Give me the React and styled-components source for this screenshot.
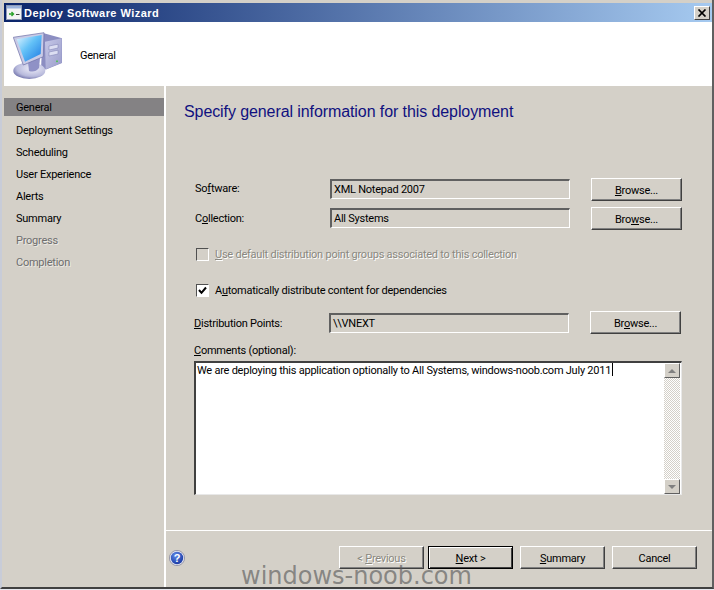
import React from "react";
import styled, { createGlobalStyle } from "styled-components";

const GlobalStyles = createGlobalStyle`
    html, body {
        margin: 0;
        padding: 0;
        background: #e6e8ee;
    }
    * {
        box-sizing: border-box;
    }
`;

const steps = [
    { name: "General", active: true },
    { name: "Deployment Settings" },
    { name: "Scheduling" },
    { name: "User Experience" },
    { name: "Alerts" },
    { name: "Summary" },
    { name: "Progress", muted: true },
    { name: "Completion", muted: true },
];

const ComputerIcon = () => (
    <svg width="50" height="48" viewBox="0 0 50 48">
        <defs>
            <linearGradient id="screen" x1="0" y1="0" x2="1" y2="1">
                <stop offset="0" stopColor="#e4f6ff" />
                <stop offset="0.45" stopColor="#63c1f7" />
                <stop offset="1" stopColor="#1c78e2" />
            </linearGradient>
            <linearGradient id="tower" x1="0" y1="0" x2="1" y2="1">
                <stop offset="0" stopColor="#c6c8e8" />
                <stop offset="1" stopColor="#9a9cca" />
            </linearGradient>
            <radialGradient id="disc" cx="0.6" cy="0.35" r="0.7">
                <stop offset="0" stopColor="#f0f0fa" />
                <stop offset="0.7" stopColor="#b8badc" />
                <stop offset="1" stopColor="#6d6fa8" />
            </radialGradient>
        </defs>
        <path d="M30 1 L49 6.3 L49 31 L33 37.5 L28 36 Z" fill="#8c8ec2" />
        <path d="M32 9.7 L48.7 6.3 L48.7 30.7 L32.7 37.3 Z" fill="url(#tower)" />
        <path d="M36 14 L45 12.2 L45 16 L36 18 Z M36 20 L45 18.2 L45 22 L36 24 Z" fill="#dcdef2" stroke="#7a7cb0" strokeWidth="0.5" />
        <rect x="43" y="28.5" width="2" height="1.6" fill="#58c060" />
        <ellipse cx="16.3" cy="38.7" rx="16" ry="8.3" fill="url(#disc)" />
        <path d="M15 30 L27 26 L26 36 Q22 41 16 39 Z" fill="#8f91c6" />
        <path d="M0.3 5.3 L31 0.7 L30.3 24.7 L10.3 33 Z" fill="#c9cbe6" stroke="#6d6fa6" strokeWidth="0.7" />
        <path d="M3.7 7.3 L28.7 3 L27.7 22 L12 29.7 Z" fill="url(#screen)" />
    </svg>
);

const TitleIcon = () => (
    <svg width="16" height="15" viewBox="0 0 16 15">
        <rect x="0.5" y="0.5" width="15" height="14" fill="#f4f4f4" stroke="#8f9bb5" />
        <rect x="1" y="1" width="14" height="2.5" fill="#9db4dc" />
        <path d="M3 9 H7.5 M5.5 7 L7.5 9 L5.5 11" fill="none" stroke="#2aa32a" strokeWidth="1.4" />
        <path d="M10 9.5 H13.5" stroke="#444" />
    </svg>
);

const HelpIcon = () => (
    <svg width="16" height="16" viewBox="0 0 16 16">
        <defs>
            <radialGradient id="help" cx="0.4" cy="0.3" r="0.8">
                <stop offset="0" stopColor="#5f8ae8" />
                <stop offset="1" stopColor="#12309c" />
            </radialGradient>
        </defs>
        <circle cx="8" cy="8" r="7.6" fill="#e4e6f0" stroke="#7c7e96" strokeWidth="0.7" />
        <circle cx="8" cy="8" r="6.2" fill="url(#help)" />
        <text x="8" y="12" textAnchor="middle" fill="#fff" fontSize="11" fontWeight="700" fontFamily="Liberation Sans, sans-serif">?</text>
    </svg>
);

const App = () => {
    return (
        <>
            <GlobalStyles />
            <Window>
                <TitleBar>
                    <TitleIcon />
                    <TitleText>Deploy Software Wizard</TitleText>
                    <CloseBtn>
                        <svg width="10" height="8" viewBox="0 0 10 8">
                            <path d="M1.5 0.5 L8.5 7.5 M8.5 0.5 L1.5 7.5" stroke="#000" strokeWidth="1.7" />
                        </svg>
                    </CloseBtn>
                </TitleBar>
                <Header>
                    <IconSlot>
                        <ComputerIcon />
                    </IconSlot>
                    <HeaderLabel>General</HeaderLabel>
                </Header>
                <Body>
                    <Sidebar>
                        {steps.map((step) => (
                            <Step key={step.name} $active={step.active} $muted={step.muted}>
                                {step.name}
                            </Step>
                        ))}
                    </Sidebar>
                    <Main>
                        <Content>
                            <Heading>Specify general information for this deployment</Heading>
                            <SoftwareRow>
                                <Label $top={4}>So<u>f</u>tware:</Label>
                                <Field>XML Notepad 2007</Field>
                                <Button>
                                    <u>B</u>rowse...
                                </Button>
                            </SoftwareRow>
                            <CollectionRow>
                                <Label $top={5}>C<u>o</u>llection:</Label>
                                <Field>All Systems</Field>
                                <Button>
                                    Bro<u>w</u>se...
                                </Button>
                            </CollectionRow>
                            <DisabledCheck>
                                <CheckBox $disabled />
                                <CheckLabel $disabled>
                                    <u>U</u>se default distribution point groups associated to this collection
                                </CheckLabel>
                            </DisabledCheck>
                            <EnabledCheck>
                                <CheckBox>
                                    <svg width="9" height="9" viewBox="0 0 9 9">
                                        <path d="M1 4 L3.5 6.8 L8 1.5" fill="none" stroke="#000" strokeWidth="2" />
                                    </svg>
                                </CheckBox>
                                <CheckLabel>
                                    A<u>u</u>tomatically distribute content for dependencies
                                </CheckLabel>
                            </EnabledCheck>
                            <PointsRow>
                                <Label $top={6}><u>D</u>istribution Points:</Label>
                                <Field>\\VNEXT</Field>
                                <Button>
                                    Br<u>o</u>wse...
                                </Button>
                            </PointsRow>
                            <CommentsLabel><u>C</u>omments (optional):</CommentsLabel>
                            <TextBox>
                                <TextValue>
                                    We are deploying this application optionally to All Systems, windows-noob.com July 2011
                                    <Caret />
                                </TextValue>
                                <ScrollBar>
                                    <ScrollBtn>
                                        <Arrow />
                                    </ScrollBtn>
                                    <ScrollTrack />
                                    <ScrollBtn>
                                        <Arrow $down />
                                    </ScrollBtn>
                                </ScrollBar>
                            </TextBox>
                        </Content>
                        <Footer>
                            <HelpWrap>
                                <HelpIcon />
                            </HelpWrap>
                            <FooterButton $disabled>
                                &lt; <u>P</u>revious
                            </FooterButton>
                            <FooterButton $primary>
                                <u>N</u>ext &gt;
                            </FooterButton>
                            <FooterButton>
                                <u>S</u>ummary
                            </FooterButton>
                            <FooterButton>Cancel</FooterButton>
                        </Footer>
                    </Main>
                </Body>
                <Watermark>windows-noob.com</Watermark>
            </Window>
        </>
    );
};

const Window = styled.div`
    position: relative;
    width: 714px;
    height: 589px;
    padding: 3px 0 0 2px;
    background: #d4d0c8;
    font-family: Roboto, "Liberation Sans", Arial, sans-serif;
    font-size: 11px;
    letter-spacing: -0.24px;
    color: #000;
    border-left: 2px solid #c8ccd8;
    border-right: 2px solid #606060;
    border-bottom: 2px solid #404040;
    display: flex;
    flex-direction: column;
    u {
        text-underline-offset: 1px;
    }
`;

const TitleBar = styled.div`
    height: 19px;
    flex: none;
    display: flex;
    align-items: center;
    gap: 2px;
    padding: 0 2px;
    background: linear-gradient(90deg, #0a246a 0%, #a6caf0 100%);
`;

const TitleText = styled.span`
    flex: 1;
    color: #fff;
    font-family: "Liberation Sans", Arial, sans-serif;
    font-size: 11px;
    font-weight: 700;
    letter-spacing: 0.45px;
`;

const CloseBtn = styled.div`
    width: 16px;
    height: 14px;
    display: flex;
    align-items: center;
    justify-content: center;
    background: #d4d0c8;
    border: 1px solid;
    border-color: #fff #404040 #404040 #fff;
`;

const Header = styled.div`
    height: 64px;
    flex: none;
    display: flex;
    align-items: center;
    padding: 2px 0 0 9px;
    background: #fff;
`;

const IconSlot = styled.div`
    display: flex;
    margin-top: 2px;
`;

const HeaderLabel = styled.span`
    margin-left: 17px;
`;

const Body = styled.div`
    flex: 1;
    display: flex;
    min-height: 0;
`;

const Sidebar = styled.div`
    width: 162px;
    flex: none;
    padding-top: 12px;
    border-right: 2px solid #fff;
`;

const Step = styled.div`
    height: ${(p) => (p.$active ? "18px" : "22px")};
    margin-bottom: ${(p) => (p.$active ? "4px" : "0")};
    padding-left: 12px;
    line-height: ${(p) => (p.$active ? "19px" : "22px")};
    background: ${(p) => (p.$active ? "#848284" : "transparent")};
    color: ${(p) => (p.$muted ? "#6e6e6e" : "#000")};
    text-shadow: ${(p) => (p.$muted ? "1px 1px 0 #eceae4" : "none")};
`;

const Main = styled.div`
    flex: 1;
    display: flex;
    flex-direction: column;
    min-width: 0;
`;

const Content = styled.div`
    flex: 1;
    display: flex;
    flex-direction: column;
    padding: 15px 0 0 28px;
`;

const Heading = styled.h1`
    margin: 0 0 0 -10px;
    font-family: "Liberation Sans", Arial, sans-serif;
    font-size: 16px;
    line-height: 22px;
    font-weight: 400;
    letter-spacing: -0.09px;
    color: #10107f;
`;

const Field = styled.div`
    height: 20px;
    margin-top: 1px;
    line-height: 17px;
    padding-left: 2px;
    background: #d4d0c8;
    border: 1px solid;
    border-width: 2px 1px 1px 2px;
    border-color: #606060 #fff #fff #606060;
    white-space: nowrap;
`;

const FormRow = styled.div`
    display: grid;
    grid-template-columns: 135px 240px 112px;
    align-items: start;
    height: 23px;
    padding-left: 1px;
`;

const SoftwareRow = styled(FormRow)`
    margin-top: 55px;
`;

const CollectionRow = styled(FormRow)`
    margin-top: 6px;
`;

const PointsRow = styled(FormRow)`
    margin-top: 14px;
    margin-left: -1px;
    ${Field} {
        margin-top: 2px;
    }
`;

const Label = styled.span`
    margin-top: ${(p) => p.$top}px;
    line-height: 14px;
    white-space: nowrap;
`;

const Button = styled.div`
    height: 23px;
    margin-left: 21px;
    padding-top: 1px;
    display: flex;
    align-items: center;
    justify-content: center;
    white-space: pre;
    border: 1px solid;
    border-color: #fff #404040 #404040 #fff;
    box-shadow: inset -1px -1px 0 #808080;
    background: #d4d0c8;
`;

const CheckRow = styled.div`
    display: flex;
    align-items: center;
    gap: 6px;
    padding-left: 2px;
    height: 14px;
`;

const DisabledCheck = styled(CheckRow)`
    margin-top: 17px;
`;

const EnabledCheck = styled(CheckRow)`
    margin-top: 22px;
`;

const CheckBox = styled.div`
    width: 13px;
    height: 13px;
    flex: none;
    display: flex;
    align-items: center;
    justify-content: center;
    border: 1px solid;
    border-color: #505050 #fff #fff #505050;
    background: ${(p) => (p.$disabled ? "#d4d0c8" : "#fff")};
`;

const CheckLabel = styled.span`
    white-space: nowrap;
    color: ${(p) => (p.$disabled ? "#8a8880" : "#000")};
    text-shadow: ${(p) => (p.$disabled ? "1px 1px 0 #fff" : "none")};
`;

const CommentsLabel = styled.div`
    margin-top: 10px;
    height: 14px;
    line-height: 14px;
`;

const TextBox = styled.div`
    margin-top: 3px;
    width: 488px;
    height: 134px;
    flex: none;
    display: flex;
    background: #fff;
    border: 1px solid;
    border-width: 2px 1px 1px 2px;
    border-color: #404040 #e8e8e8 #e8e8e8 #404040;
`;

const TextValue = styled.div`
    flex: 1;
    padding: 0 0 0 1px;
    line-height: 13px;
    white-space: nowrap;
`;

const Caret = styled.span`
    display: inline-block;
    width: 1px;
    height: 13px;
    margin-left: 1px;
    background: #000;
    vertical-align: -2px;
`;

const ScrollBar = styled.div`
    width: 16px;
    margin-right: 1px;
    flex: none;
    display: flex;
    flex-direction: column;
`;

const ScrollBtn = styled.div`
    height: 15px;
    flex: none;
    display: flex;
    align-items: center;
    justify-content: center;
    background: #d4d0c8;
    border: 1px solid;
    border-color: #fff #606060 #606060 #fff;
`;

const ScrollTrack = styled.div`
    flex: 1;
    background: repeating-conic-gradient(#fff 0 25%, #d4d0c8 0 50%) 0 0 / 2px 2px;
`;

const Arrow = styled.span`
    width: 0;
    height: 0;
    border-left: 4px solid transparent;
    border-right: 4px solid transparent;
    ${(p) => (p.$down ? "border-top: 4px solid #808080;" : "border-bottom: 4px solid #808080;")}
`;

const Footer = styled.div`
    height: 57px;
    flex: none;
    display: flex;
    align-items: flex-start;
    padding: 15px 15px 0 0;
    border-top: 1px solid #fff;
`;

const HelpWrap = styled.div`
    margin: 4px auto 0 3px;
    width: 16px;
`;

const FooterButton = styled.div`
    width: 85px;
    height: 23px;
    margin-left: ${(p) => (p.$primary ? "4px" : "7px")};
    padding-top: 1px;
    flex: none;
    display: flex;
    align-items: center;
    justify-content: center;
    white-space: pre;
    background: #d4d0c8;
    color: ${(p) => (p.$disabled ? "#8a8880" : "#000")};
    text-shadow: ${(p) => (p.$disabled ? "1px 1px 0 #fff" : "none")};
    border: 1px solid;
    border-color: ${(p) => (p.$primary ? "#000" : "#fff #404040 #404040 #fff")};
    box-shadow: ${(p) =>
        p.$primary
            ? "inset 1px 1px 0 #fff, inset -1px -1px 0 #404040"
            : "inset -1px -1px 0 #808080"};
`;

const Watermark = styled.div`
    position: absolute;
    left: 239px;
    top: 565px;
    font-family: "DejaVu Sans", sans-serif;
    font-size: 24px;
    line-height: 22px;
    letter-spacing: 0;
    color: rgba(90, 90, 90, 0.65);
    white-space: nowrap;
`;

export default App;
